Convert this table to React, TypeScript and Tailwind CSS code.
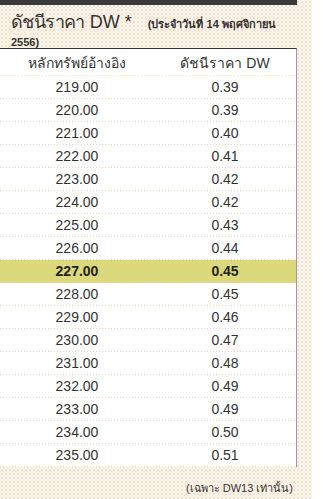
const rows: [string, string][] = [
  ["219.00", "0.39"],
  ["220.00", "0.39"],
  ["221.00", "0.40"],
  ["222.00", "0.41"],
  ["223.00", "0.42"],
  ["224.00", "0.42"],
  ["225.00", "0.43"],
  ["226.00", "0.44"],
  ["227.00", "0.45"],
  ["228.00", "0.45"],
  ["229.00", "0.46"],
  ["230.00", "0.47"],
  ["231.00", "0.48"],
  ["232.00", "0.49"],
  ["233.00", "0.49"],
  ["234.00", "0.50"],
  ["235.00", "0.51"],
];

const dots =
  "bg-[#fffdf4] bg-[radial-gradient(circle,#f9d3e3_0.7px,transparent_1px),radial-gradient(circle,#f9efbd_0.7px,transparent_1px)] bg-[length:4px_4px,4px_4px] bg-[position:0_0,2px_2px]";

function Row({ a, b, hot }: { a: string; b: string; hot?: boolean }) {
  return (
    <div className={hot ? "bg-[#dcd97c]" : ""}>
      <div
        className={`flex h-[22px] items-center text-[14px] ${
          hot ? "font-bold text-[#222]" : "text-[#333]"
        }`}
      >
        <div className="w-[154px] text-center">{a}</div>
        <div className="flex-1 text-center">{b}</div>
      </div>
      <div className="h-px bg-[repeating-linear-gradient(90deg,#f5cfbf_0_1px,transparent_1px_3px)]" />
    </div>
  );
}

export default function App() {
  return (
    <div className="min-h-screen bg-white" style={{ fontFamily: '"Liberation Sans", Arial, sans-serif' }}>
      <div className={`w-[312px] min-h-screen ${dots}`}>
        <div className="w-[297px]">
          <div className="h-[5px] bg-[#393939]" />
          <div className="h-[43px] pl-[11px] pt-[6px] leading-[15px] text-[#333]">
            <span className="text-[18px] leading-[22px]">
              <span className="tracking-[-0.6px]">ดัชนีราคา</span> DW *
            </span>
            <span className="ml-[16px] text-[11px] font-bold">
              (ประจำวันที่ 14 พฤศจิกายน
              <br />
              2556)
            </span>
          </div>
          <div className="border-t border-[#333] border-r border-r-[#9a9aa8] bg-white">
            <div className="flex h-[26px] items-center pt-[2px] text-[14px] text-[#333]">
              <div className="w-[154px] text-center">หลักทรัพย์อ้างอิง</div>
              <div className="flex-1 text-center">ดัชนีราคา DW</div>
            </div>
            <div className="h-px bg-[repeating-linear-gradient(90deg,#f3e6a8_0_1px,transparent_1px_3px)]" />
            {rows.map(([a, b]) => (
              <Row key={a} a={a} b={b} hot={a === "227.00"} />
            ))}
          </div>
          <div className="mt-[13px] pr-[4px] text-right text-[11px] text-[#333]">
            (เฉพาะ DW13 เท่านั้น)
          </div>
        </div>
      </div>
    </div>
  );
}
